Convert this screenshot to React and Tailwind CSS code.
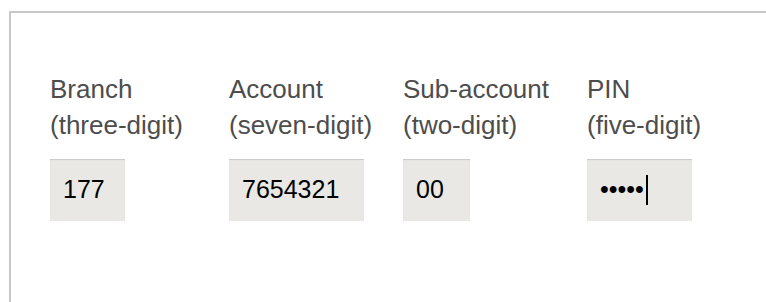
import React from 'react';

const fields = [
  { label: 'Branch', hint: '(three-digit)', value: '177', col: 'w-[179px]', box: 'w-[75px]' },
  { label: 'Account', hint: '(seven-digit)', value: '7654321', col: 'w-[174px]', box: 'w-[135px]' },
  { label: 'Sub-account', hint: '(two-digit)', value: '00', col: 'w-[184px]', box: 'w-[67px]' },
  { label: 'PIN', hint: '(five-digit)', value: '•••••', col: 'w-[184px]', box: 'w-[105px]', caret: true },
];

export default function App() {
  return (
    <div
      className="w-[766px] h-[302px] overflow-hidden bg-white pt-[11px] pl-[9px]"
      style={{ fontFamily: '"Liberation Sans", Arial, Helvetica, sans-serif' }}
    >
      <div className="h-[320px] w-[800px] border-t-2 border-l-2 border-[#c8c8c8] pt-[58px] pl-[39px]">
        <div className="flex">
          {fields.map((f) => (
            <div key={f.label} className={`${f.col} shrink-0`}>
              <div className="text-[26px] leading-[36px] text-[#4d4d4d] whitespace-nowrap">
                <div>{f.label}</div>
                <div>{f.hint}</div>
              </div>
              <div
                className={`${f.box} h-[62px] mt-[16px] bg-[#e9e8e5] shadow-[inset_0_1px_1px_rgba(0,0,0,0.14)] flex items-center pl-[13px] text-[25px] text-black`}
              >
                <span>{f.value}</span>
                {f.caret && <span className="ml-[2px] w-[2px] h-[30px] bg-black" />}
              </div>
            </div>
          ))}
        </div>
      </div>
    </div>
  );
}
